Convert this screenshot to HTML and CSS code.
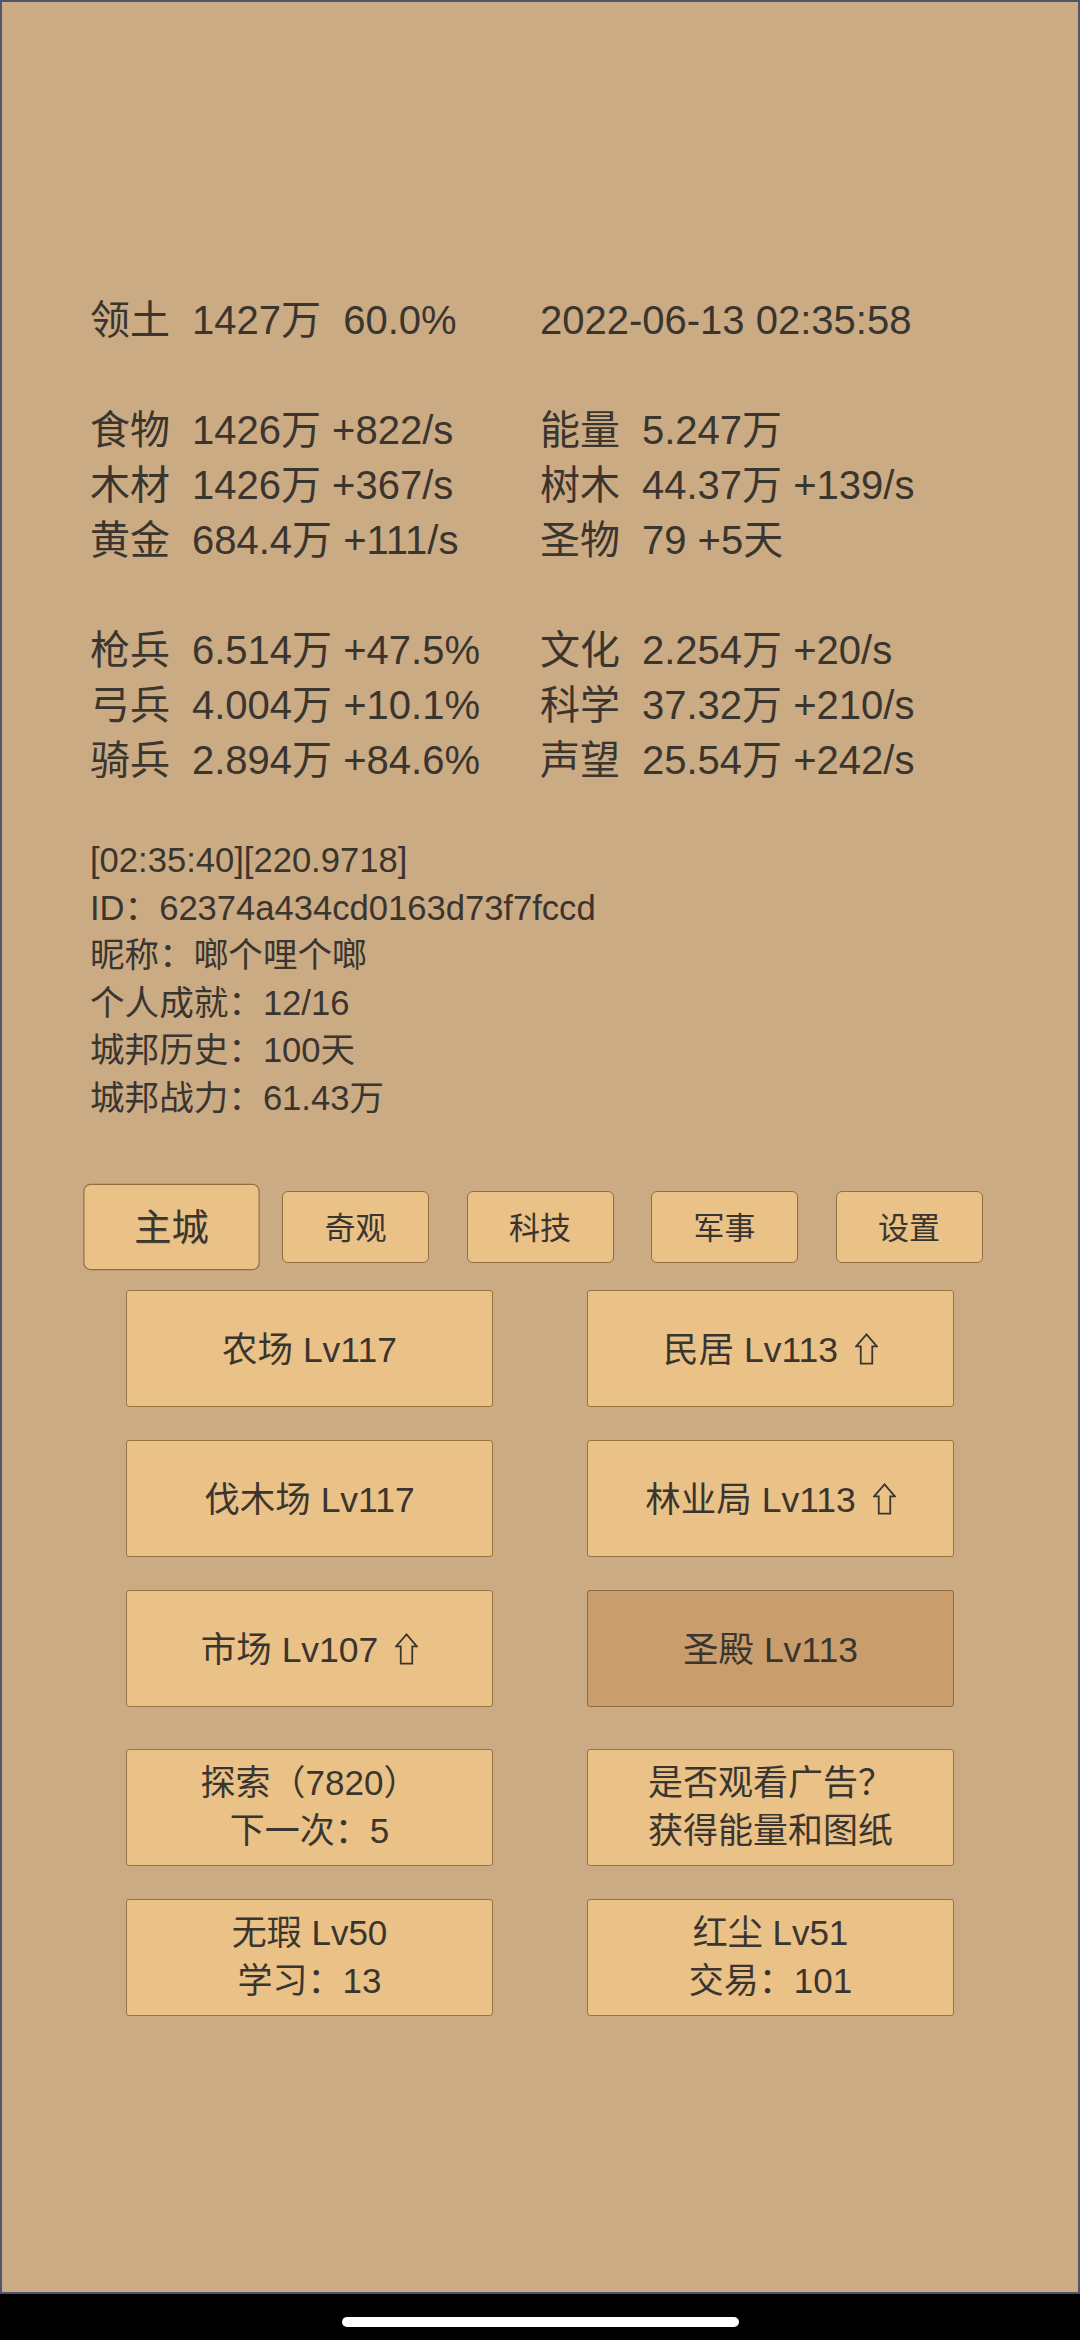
FILE: index.html
```html
<!DOCTYPE html>
<html>

<head>
    <meta charset="UTF-8">
    <title>城邦</title>
    <link rel="stylesheet" href="styles.css">
</head>

<body>
    <div class="screen">
        <div class="stats">
            <div class="row">
                <div class="cell"><span class="label">领土</span><span class="value">1427万  60.0%</span></div>
                <div class="cell"><span class="value">2022-06-13 02:35:58</span></div>
            </div>
            <div class="blank"></div>
            <div class="row">
                <div class="cell"><span class="label">食物</span><span class="value">1426万 +822/s</span></div>
                <div class="cell"><span class="label">能量</span><span class="value">5.247万</span></div>
            </div>
            <div class="row">
                <div class="cell"><span class="label">木材</span><span class="value">1426万 +367/s</span></div>
                <div class="cell"><span class="label">树木</span><span class="value">44.37万 +139/s</span></div>
            </div>
            <div class="row">
                <div class="cell"><span class="label">黄金</span><span class="value">684.4万 +111/s</span></div>
                <div class="cell"><span class="label">圣物</span><span class="value">79 +5天</span></div>
            </div>
            <div class="blank"></div>
            <div class="row">
                <div class="cell"><span class="label">枪兵</span><span class="value">6.514万 +47.5%</span></div>
                <div class="cell"><span class="label">文化</span><span class="value">2.254万 +20/s</span></div>
            </div>
            <div class="row">
                <div class="cell"><span class="label">弓兵</span><span class="value">4.004万 +10.1%</span></div>
                <div class="cell"><span class="label">科学</span><span class="value">37.32万 +210/s</span></div>
            </div>
            <div class="row">
                <div class="cell"><span class="label">骑兵</span><span class="value">2.894万 +84.6%</span></div>
                <div class="cell"><span class="label">声望</span><span class="value">25.54万 +242/s</span></div>
            </div>
        </div>

        <div class="info">
            <div>[02:35:40][220.9718]</div>
            <div>ID：62374a434cd0163d73f7fccd</div>
            <div>昵称：啷个哩个啷</div>
            <div>个人成就：12/16</div>
            <div>城邦历史：100天</div>
            <div>城邦战力：61.43万</div>
        </div>

        <div class="tabs">
            <div class="tab active">主城</div>
            <div class="tab">奇观</div>
            <div class="tab">科技</div>
            <div class="tab">军事</div>
            <div class="tab">设置</div>
        </div>

        <div class="buildings">
            <div class="btn">农场 Lv117</div>
            <div class="btn">民居 Lv113 <svg class="up" viewBox="0 0 22 30"><path d="M11 1 L21 12.5 H16.5 V29 H5.5 V12.5 H1 Z"/></svg></div>
            <div class="btn">伐木场 Lv117</div>
            <div class="btn">林业局 Lv113 <svg class="up" viewBox="0 0 22 30"><path d="M11 1 L21 12.5 H16.5 V29 H5.5 V12.5 H1 Z"/></svg></div>
            <div class="btn">市场 Lv107 <svg class="up" viewBox="0 0 22 30"><path d="M11 1 L21 12.5 H16.5 V29 H5.5 V12.5 H1 Z"/></svg></div>
            <div class="btn dark">圣殿 Lv113</div>
        </div>

        <div class="buildings actions">
            <div class="btn two"><span>探索（7820）</span><span>下一次：5</span></div>
            <div class="btn two"><span>是否观看广告？</span><span>获得能量和图纸</span></div>
            <div class="btn two"><span>无瑕 Lv50</span><span>学习：13</span></div>
            <div class="btn two"><span>红尘 Lv51</span><span>交易：101</span></div>
        </div>
    </div>
    <div class="navbar">
        <div class="pill"></div>
    </div>
</body>

</html>
```

FILE: styles.css
```css
body {
    margin: 0;
    background-color: #000;
    font-family: "Liberation Sans", "Noto Sans CJK SC", sans-serif;
    color: #3a352f;
}

.screen {
    height: 2294px;
    box-sizing: border-box;
    border: 2px solid #4f556e;
    background-color: #cbab83;
}

.stats {
    padding: 291px 0 0 88px;
    font-size: 40px;
    line-height: 55px;
}

.row {
    display: flex;
}

.cell {
    width: 450px;
    display: flex;
    white-space: pre;
}

.label {
    margin-right: 22px;
}

.blank {
    height: 55px;
}

.info {
    margin-top: 49px;
    padding-left: 88px;
    font-size: 34.6px;
    line-height: 47.6px;
}

.tabs {
    display: flex;
    justify-content: center;
    gap: 37.5px;
    margin-top: 68px;
}

.tab {
    width: 147px;
    height: 72px;
    box-sizing: border-box;
    display: flex;
    align-items: center;
    justify-content: center;
    padding-bottom: 3px;
    background-color: #eac187;
    border: 1.5px solid #8f6e42;
    border-radius: 6px;
    font-size: 31px;
}

.tab.active {
    transform: scale(1.2);
    text-shadow: 0.5px 0.5px 0.5px rgba(60, 40, 20, 0.2);
}

.buildings {
    display: grid;
    grid-template-columns: 367px 367px;
    grid-auto-rows: 117px;
    column-gap: 94px;
    row-gap: 33px;
    justify-content: center;
    margin-top: 27px;
}

.actions {
    margin-top: 42px;
}

.btn {
    box-sizing: border-box;
    display: flex;
    align-items: center;
    justify-content: center;
    padding-bottom: 4px;
    background-color: #eac187;
    border: 1.5px solid #977444;
    border-radius: 3px;
    font-size: 35.5px;
    white-space: pre;
}

.btn.dark {
    background-color: #c99e6c;
    border-color: #8a6a3e;
}

.btn.two {
    flex-direction: column;
    padding-bottom: 0;
    font-size: 35px;
    line-height: 48px;
}

.up {
    width: 23px;
    height: 32px;
    margin: 6px 0 0 7px;
    fill: none;
    stroke: #3a352f;
    stroke-width: 1.7;
}

.navbar {
    height: 46px;
    display: flex;
    justify-content: center;
}

.pill {
    width: 397px;
    height: 10px;
    margin-top: 23px;
    border-radius: 5px;
    background-color: #fff;
}
```
